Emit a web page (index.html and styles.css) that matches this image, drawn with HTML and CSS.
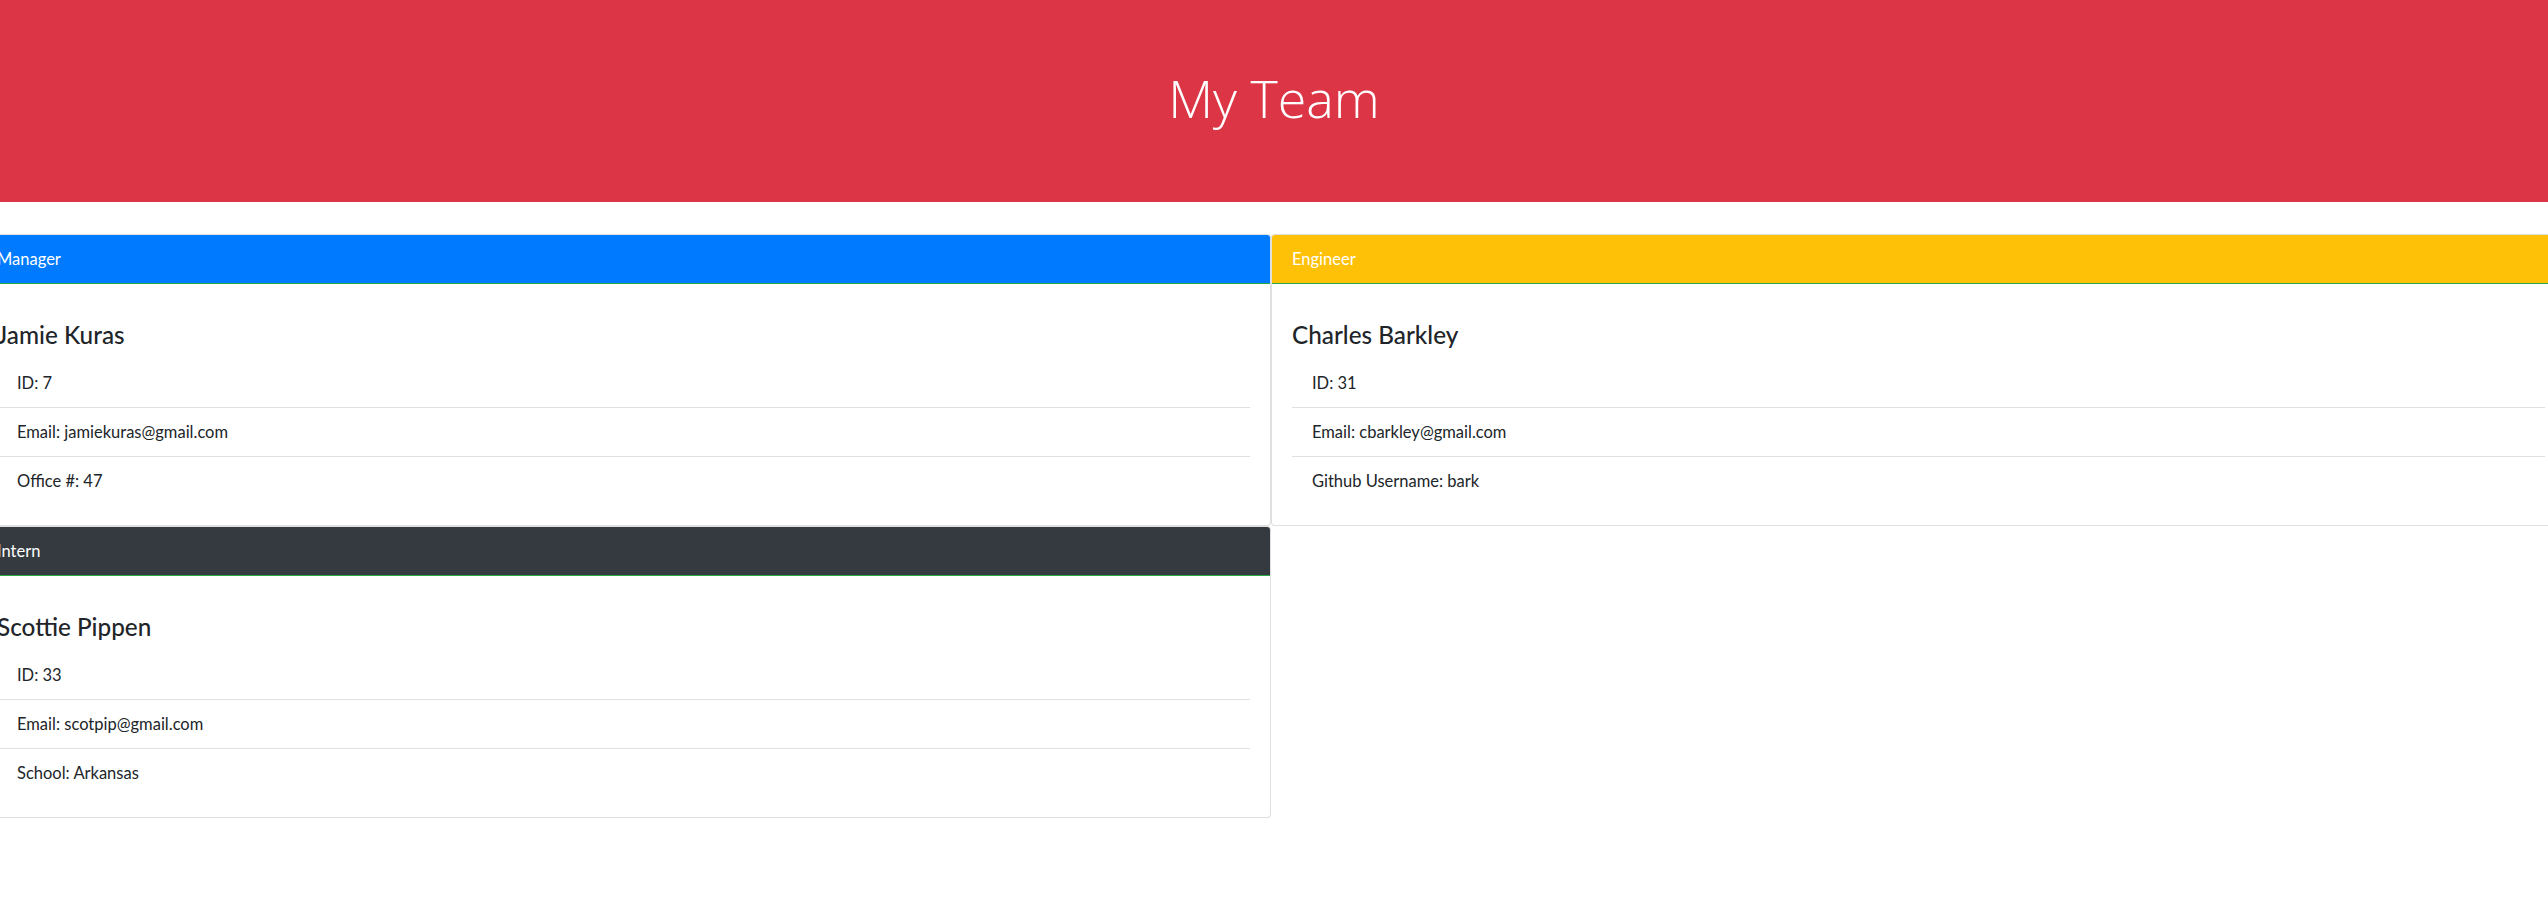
FILE: index.html
```html
<!DOCTYPE html>
<html lang="en">
<head>
<meta charset="utf-8">
<title>My Team</title>
<link rel="stylesheet" href="styles.css">
</head>
<body>
<header class="jumbotron">
  <h1 class="display">My Team</h1>
</header>
<main class="team">
  <section class="card">
    <div class="card-header bg-manager">Manager</div>
    <div class="card-body">
      <h4 class="card-title">Jamie Kuras</h4>
      <ul class="list">
        <li>ID: 7</li>
        <li>Email: jamiekuras@gmail.com</li>
        <li>Office #: 47</li>
      </ul>
    </div>
  </section>
  <section class="card">
    <div class="card-header bg-engineer">Engineer</div>
    <div class="card-body">
      <h4 class="card-title">Charles Barkley</h4>
      <ul class="list">
        <li>ID: 31</li>
        <li>Email: cbarkley@gmail.com</li>
        <li>Github Username: bark</li>
      </ul>
    </div>
  </section>
  <section class="card">
    <div class="card-header bg-intern">Intern</div>
    <div class="card-body">
      <h4 class="card-title">Scottie Pippen</h4>
      <ul class="list">
        <li>ID: 33</li>
        <li>Email: scotpip@gmail.com</li>
        <li>School: Arkansas</li>
      </ul>
    </div>
  </section>
</main>
</body>
</html>
```
FILE: styles.css
```css
html, body {
  margin: 0;
  padding: 0;
  overflow: hidden;
  background: #fff;
}
body {
  font-family: Lato, "Open Sans", "Liberation Sans", sans-serif;
  font-size: 16.5px;
  line-height: 1.5;
  color: #212529;
}
.jumbotron {
  background: #dc3545;
  height: 202px;
  box-sizing: border-box;
  padding-top: 64px;
  margin-bottom: 32px;
  text-align: center;
}
.display {
  margin: 0;
  font-family: "Open Sans", Lato, sans-serif;
  font-weight: 300;
  font-size: 52px;
  line-height: 67px;
  color: #fff;
}
.team {
  display: grid;
  grid-template-columns: 1295px 1295px;
  column-gap: 0;
  width: 2590px;
  margin-left: -24px;
}
.card {
  border: 1px solid rgba(0,0,0,.125);
  border-radius: 4px;
  background: #fff;
  display: flex;
  flex-direction: column;
}
.card-header {
  height: 48px;
  padding: 0 20px;
  line-height: 48px;
  color: #fff;
  border-bottom: 1px solid #28a745;
  border-radius: 3px 3px 0 0;
}
.bg-manager { background: #007bff; }
.bg-engineer { background: #ffc107; }
.bg-intern { background: #343a40; }
.card-body {
  padding: 20px;
}
.card-title {
  margin: 16px 0 10px;
  font-size: 24.3px;
  line-height: 29px;
  font-weight: 500;
}
.list {
  list-style: none;
  margin: 0;
  padding: 0;
}
.list li {
  padding: 12px 20px;
  line-height: 24px;
  border-bottom: 1px solid rgba(0,0,0,.125);
}
.list li:last-child {
  border-bottom: 0;
}
```
